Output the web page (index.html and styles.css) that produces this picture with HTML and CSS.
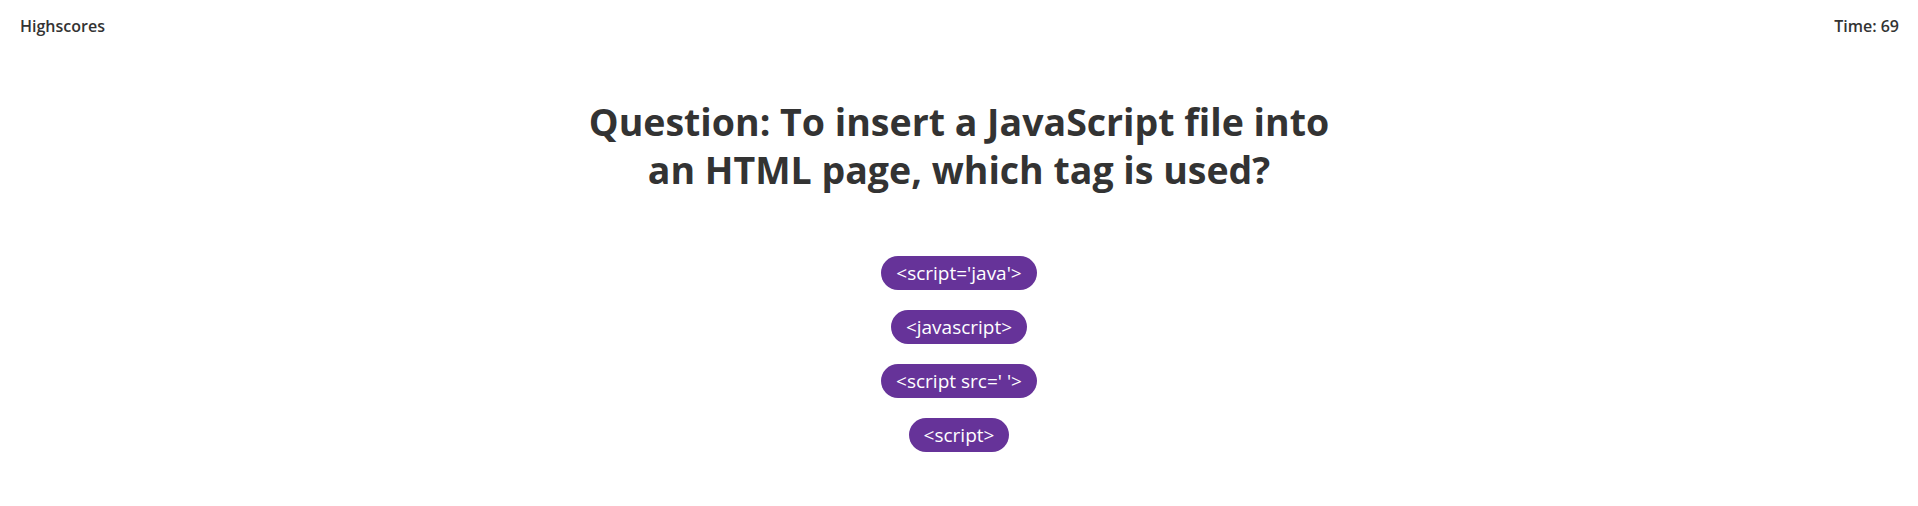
FILE: index.html
```html
<!DOCTYPE html>
<html lang="en">
<head>
<meta charset="utf-8">
<title>Quiz</title>
<link rel="stylesheet" href="styles.css">
</head>
<body>
<header class="topbar">
  <a class="highscores" href="#">Highscores</a>
  <div class="timer">Time: 69</div>
</header>
<main class="quiz">
  <h1 class="question">Question: To insert a JavaScript file into an HTML page, which tag is used?</h1>
  <div class="choices">
    <button class="choice">&lt;script='java'&gt;</button>
    <button class="choice">&lt;javascript&gt;</button>
    <button class="choice">&lt;script src=' '&gt;</button>
    <button class="choice">&lt;script&gt;</button>
  </div>
</main>
</body>
</html>
```

FILE: styles.css
```css
* { box-sizing: border-box; }
html, body { margin: 0; padding: 0; background: #fff; }
body {
  font-family: "Open Sans", "Lato", sans-serif;
  color: #333;
}
.topbar {
  display: flex;
  justify-content: space-between;
  align-items: center;
  padding: 16px 19px 0 20px;
  font-size: 16px;
  font-weight: 600;
  line-height: 20px;
}
.highscores { color: #333; text-decoration: none; }
.timer { color: #333; }
.quiz {
  display: flex;
  flex-direction: column;
  align-items: center;
}
.question {
  margin: 62px 0 0;
  max-width: 775px;
  text-align: center;
  font-size: 37.5px;
  line-height: 48px;
  font-weight: 700;
  color: #333;
}
.choices {
  display: flex;
  flex-direction: column;
  align-items: center;
  gap: 20px;
  margin-top: 62px;
}
.choice {
  font-family: "Open Sans", "Lato", sans-serif;
  font-size: 19px;
  line-height: 22px;
  padding: 6px 15px;
  border: none;
  border-radius: 20px;
  background: #663399;
  color: #fff;
  cursor: pointer;
}
```
